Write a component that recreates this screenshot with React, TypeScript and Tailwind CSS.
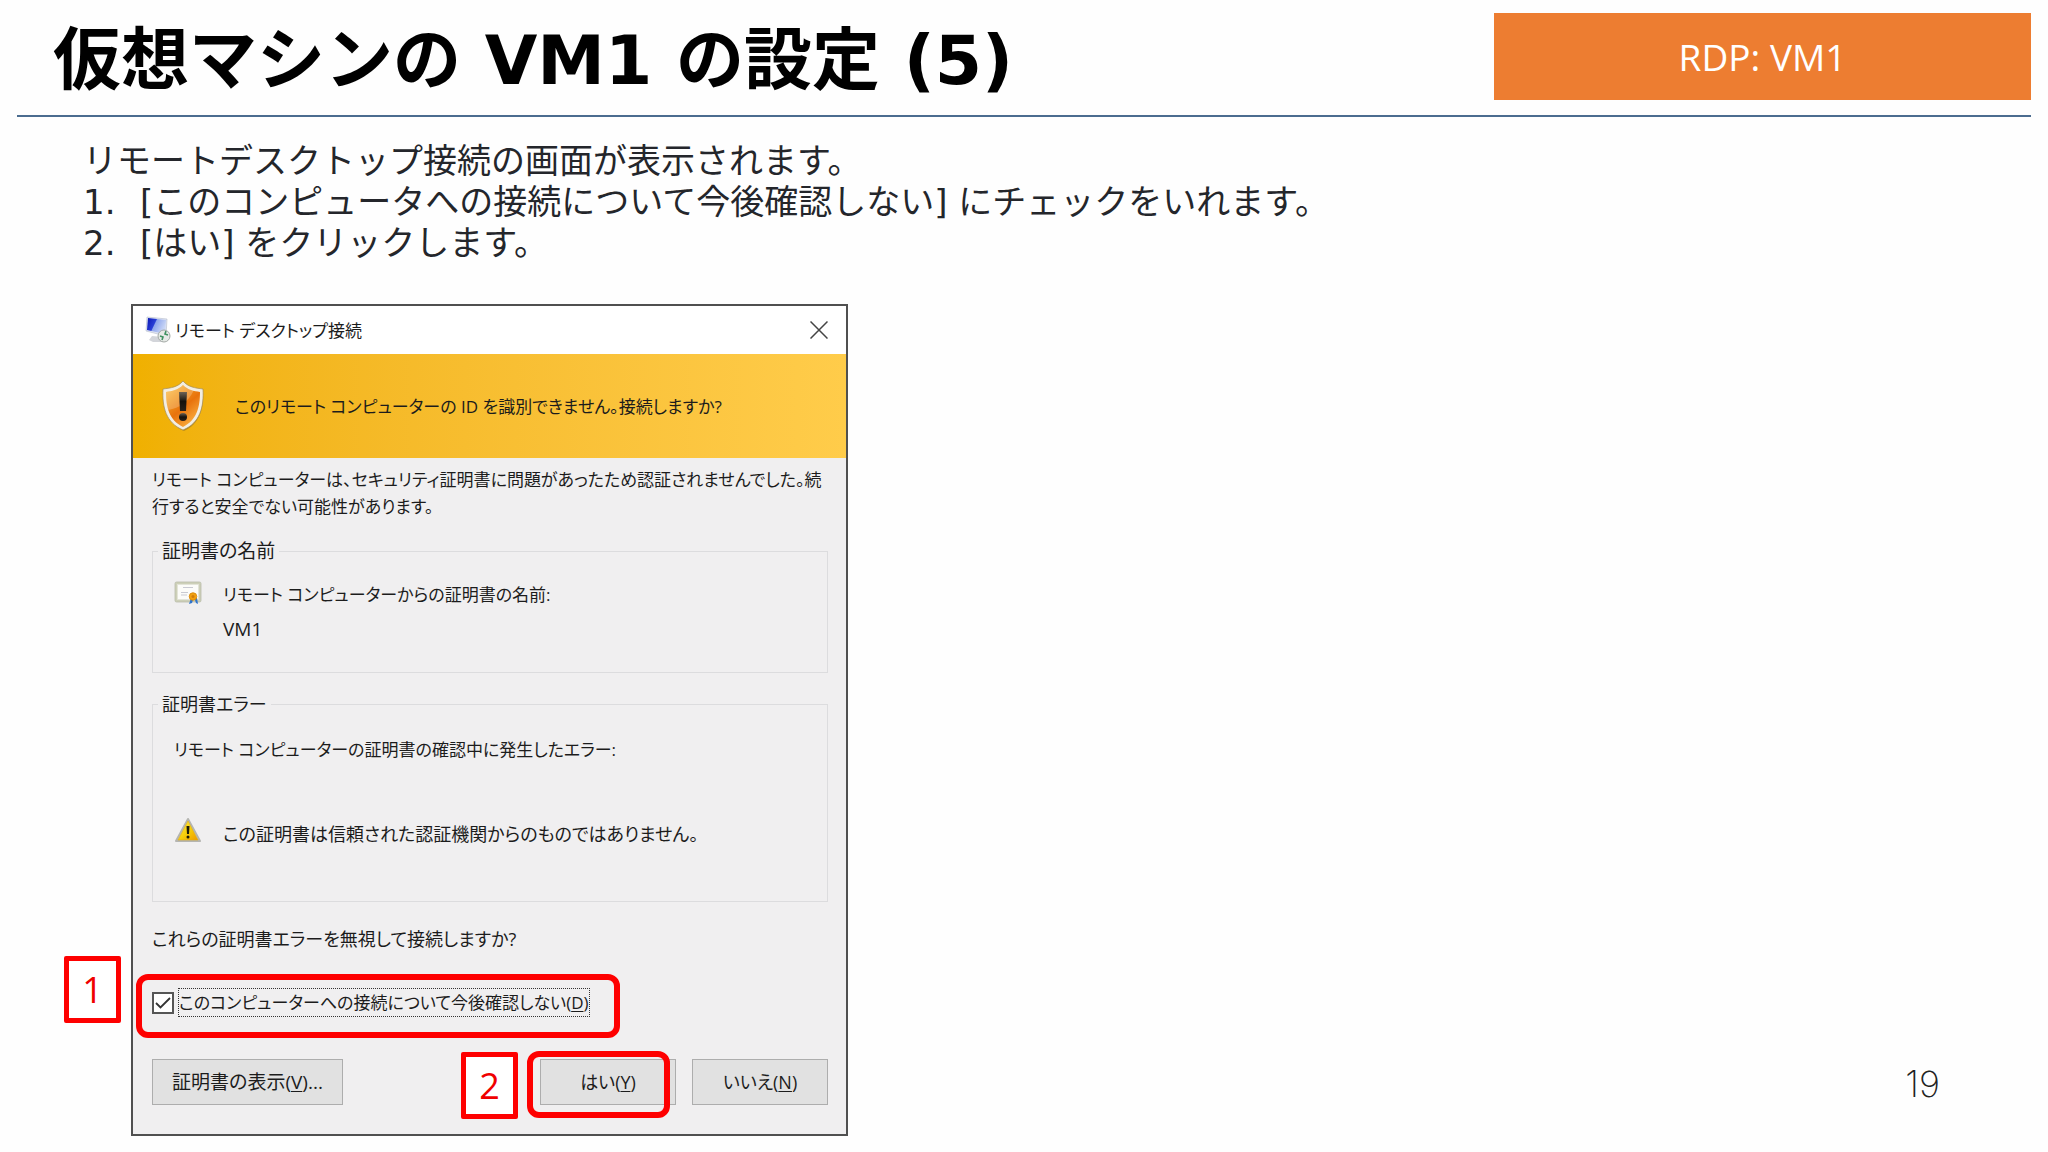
import React from 'react';

interface MarkerProps {
  label: string;
  className: string;
}

interface DialogButtonProps {
  text: string;
  accessKey: string;
  suffix?: string;
  className: string;
}

const steps = [
  '[このコンピュータへの接続について今後確認しない] にチェックをいれます。',
  '[はい] をクリックします。',
];

const RemoteDesktopIcon = () => (
  <svg width="26" height="28" viewBox="0 0 26 28" aria-hidden="true">
    <defs>
      <linearGradient id="rd-screen" x1="0" y1="0" x2="1" y2="0.4">
        <stop offset="0" stopColor="#0a16b4" />
        <stop offset="0.45" stopColor="#2a3fd6" />
        <stop offset="0.5" stopColor="#8fa6ec" />
        <stop offset="1" stopColor="#c9d6f6" />
      </linearGradient>
    </defs>
    <path d="M7 20l-3 4 4 2 10 0 0-5z" fill="#d3d5da" />
    <path d="M2 1l20 2-1 17L1 15z" fill="#dfe4f2" stroke="#b6bccb" strokeWidth="0.6" />
    <path d="M3 2l18 2-1 14L2 14z" fill="url(#rd-screen)" />
    <circle cx="19" cy="20" r="6" fill="#e6e9e6" stroke="#a4aaa6" />
    <path d="M15 20l3 1-1 3M23 19l-3-1 1-3" fill="none" stroke="#3f9160" strokeWidth="1.6" />
  </svg>
);

const ShieldIcon = () => (
  <svg width="44" height="52" viewBox="0 0 44 52" aria-hidden="true">
    <defs>
      <linearGradient id="shield-fill" x1="0" y1="0" x2="0.7" y2="1">
        <stop offset="0" stopColor="#fbc14b" />
        <stop offset="0.3" stopColor="#f39a1f" />
        <stop offset="0.6" stopColor="#e8720c" />
        <stop offset="1" stopColor="#fbb040" />
      </linearGradient>
      <linearGradient id="shield-mark" x1="0" y1="0" x2="0" y2="1">
        <stop offset="0" stopColor="#6d6255" />
        <stop offset="0.5" stopColor="#17120d" />
        <stop offset="1" stopColor="#2b2018" />
      </linearGradient>
    </defs>
    <path d="M22 2C17 7 10 9 3 9c-1 18 3 34 19 41C38 43 42 27 41 9 34 9 27 7 22 2z" fill="#8a6a20" opacity="0.5" transform="translate(1 1)" />
    <path d="M22 1C17 7 10 8 2 9c-1 18 3 34 20 41C39 43 43 27 42 9 34 8 27 7 22 1z" fill="#f3eee2" stroke="#a08a58" strokeWidth="0.7" />
    <path d="M22 5c-5 5-11 6-17 7 0 15 3 28 17 35 14-7 17-20 17-35-6-1-12-2-17-7z" fill="url(#shield-fill)" />
    <path d="M22 5c-5 5-11 6-17 7 0 7 0 12 2 18 12-2 20-8 26-20-4-1-8-2-11-5z" fill="#fff" opacity="0.22" />
    <path d="M18 12h8l-1 19h-6z" fill="url(#shield-mark)" />
    <circle cx="22" cy="37" r="4" fill="url(#shield-mark)" />
  </svg>
);

const CertificateIcon = () => (
  <svg width="28" height="24" viewBox="0 0 28 24" aria-hidden="true">
    <rect x="1" y="1" width="26" height="20" rx="1.5" fill="#cdd0b8" stroke="#b9bba9" strokeWidth="0.8" />
    <rect x="3.5" y="3.5" width="21" height="15" fill="#fcfcf9" stroke="#e3e4d8" strokeWidth="0.8" />
    <path d="M9 6.5h10M7 11.500h7M7 14h6" stroke="#c9cad2" />
    <path d="M17 17l-2 6 3-1 1-3 2 0 1 3 2 1-1-6z" fill="#2f74cf" />
    <circle cx="19" cy="15.500" r="3.800" fill="#f0a010" stroke="#d58608" strokeWidth="0.8" />
    <circle cx="19" cy="15.500" r="1.500" fill="#d27c08" />
  </svg>
);

const WarningIcon = () => (
  <svg width="28" height="26" viewBox="0 0 28 26" aria-hidden="true">
    <defs>
      <linearGradient id="warn-fill" x1="0" y1="0" x2="1" y2="1">
        <stop offset="0" stopColor="#fff04a" />
        <stop offset="0.55" stopColor="#f6cc08" />
        <stop offset="1" stopColor="#ee9a00" />
      </linearGradient>
    </defs>
    <path d="M14 2L26 24H2z" fill="#d4d4d0" stroke="#b5b5b1" strokeWidth="2" strokeLinejoin="round" />
    <path d="M14 4L24 23H4z" fill="url(#warn-fill)" stroke="#e0ac10" strokeWidth="0.6" strokeLinejoin="round" />
    <path d="M12.500 9h3l-0.500 8h-2z" fill="#1c1a08" />
    <circle cx="14" cy="20" r="1.500" fill="#1c1a08" />
  </svg>
);

// Numbered red callout box
const Marker: React.FC<MarkerProps> = ({ label, className }) => (
  <span className={`absolute flex h-[67px] w-[57px] items-center justify-center rounded-xs border-5 border-[#fe0000] bg-white text-4xl text-[#f00000] ${className}`}>
    {label}
  </span>
);

const DialogButton: React.FC<DialogButtonProps> = ({ text, accessKey, suffix, className }) => (
  <button type="button" className={`h-[46px] border border-[#adadad] bg-[#e1e1e1] ${className}`}>
    {text}(<u className="underline-offset-2">{accessKey}</u>){suffix}
  </button>
);

const CertificateDialog = () => (
  <section
    aria-labelledby="dialog-title"
    className="relative w-[717px] border-2 border-[#505050] bg-[#f0eff0] font-['Open_Sans','Noto_Sans_CJK_JP',sans-serif] text-[17px] leading-[27px] text-[#1c1c1c] [font-feature-settings:'palt']"
  >
    {/* Title bar */}
    <header className="flex h-12 items-center gap-1 bg-white pr-4 pl-3">
      <RemoteDesktopIcon />
      <h2 id="dialog-title">リモート デスクトップ接続</h2>
      <button type="button" aria-label="閉じる" className="ml-auto p-0.5">
        <svg width="18" height="18" viewBox="0 0 18 18" fill="none" stroke="#444" strokeWidth="1.500">
          <path d="M0.500 0.500l17 17M17.500 0.500l-17 17" />
        </svg>
      </button>
    </header>

    <div className="flex h-[104px] items-center gap-[30px] bg-linear-to-r from-[#f0b000] to-[#ffcc4a] pl-7">
      <ShieldIcon />
      <p>このリモート コンピューターの ID を識別できません。接続しますか?</p>
    </div>

    <div className="pt-2 pr-[18px] pb-[29px] pl-[19px]">
      <p>リモート コンピューターは、セキュリティ証明書に問題があったため認証されませんでした。続行すると安全でない可能性があります。</p>

      <fieldset className="mt-[18px] h-[135px] border border-[#dcdcde] px-[21px]">
        <legend className="-ml-4 px-1 text-[19px]">証明書の名前</legend>
        <div className="mt-4 flex gap-[21px]">
          <CertificateIcon />
          <div>
            <p>リモート コンピューターからの証明書の名前:</p>
            <p className="mt-2 text-[19px]">VM1</p>
          </div>
        </div>
      </fieldset>

      <fieldset className="mt-[18px] h-[211px] border border-[#dcdcde] px-[21px]">
        <legend className="-ml-4 px-1 text-lg/[27px]">証明書エラー</legend>
        <p className="mt-[18px]">リモート コンピューターの証明書の確認中に発生したエラー:</p>
        <div className="mt-[54px] flex gap-[21px]">
          <WarningIcon />
          <p className="mt-1 text-lg/[27px]">この証明書は信頼された認証機関からのものではありません。</p>
        </div>
      </fieldset>

      <p className="mt-6 text-lg/[27px]">これらの証明書エラーを無視して接続しますか?</p>

      <div className="mt-[35px] flex items-center gap-1">
        <span className="relative flex">
          <input id="skip-confirm" type="checkbox" defaultChecked className="peer size-[22px] appearance-none border-2 border-[#555] bg-white" />
          <svg width="22" height="22" viewBox="0 0 22 22" fill="none" stroke="#333" strokeWidth="1.800" className="pointer-events-none absolute inset-0 hidden peer-checked:block">
            <path d="M4 11l4.500 4.500L18 6" />
          </svg>
        </span>
        <label htmlFor="skip-confirm" className="border border-dotted border-[#333]">
          このコンピューターへの接続について今後確認しない(<u className="underline-offset-2">D</u>)
        </label>
      </div>

      <div className="mt-[42px] flex">
        <DialogButton text="証明書の表示" accessKey="V" suffix="..." className="w-[191px] text-[19px]" />
        <DialogButton text="はい" accessKey="Y" className="ml-auto w-[136px] text-lg" />
        <DialogButton text="いいえ" accessKey="N" className="ml-4 w-[136px] text-lg" />
      </div>
    </div>

    {/* Callouts over the dialog */}
    <span className="pointer-events-none absolute bottom-24 left-[3px] h-16 w-[484px] rounded-xl border-6 border-[#fe0000]" />
    <span className="pointer-events-none absolute bottom-4 left-[394px] h-[67px] w-[143px] rounded-xl border-6 border-[#fe0000]" />
    <Marker label="1" className="bottom-[111px] -left-[69px]" />
    <Marker label="2" className="bottom-[15px] left-[328px]" />
  </section>
);

const App: React.FC = () => {
  return (
    <main className="min-h-screen bg-[#fefefe] px-[17px] pt-[13px] pb-4 font-['DejaVu_Sans','Noto_Sans_CJK_JP',sans-serif]">
      <header className="flex items-start justify-between border-b-2 border-[#4b6c8f] pb-[6px]">
        <h1 className="pl-9 text-[68px] leading-[96px] font-bold text-black">
          仮想マシンの VM1 の設定 (5)
        </h1>
        <p className="flex h-[87px] w-[537px] items-center justify-center bg-[#ed7d31] font-['Open_Sans',sans-serif] text-[37px] text-white">
          RDP: VM1
        </p>
      </header>

      <div className="mt-6 pl-[66px] text-[34px] leading-[41px] text-[#24262b]">
        <p>リモートデスクトップ接続の画面が表示されます。</p>
        <ol>
          {steps.map((step, index) => (
            <li key={step} className="flex">
              <span className="w-[57px]">{index + 1}.</span>
              <span>{step}</span>
            </li>
          ))}
        </ol>
      </div>

      <div className="mt-10 flex items-end justify-between pr-[91px] pl-[114px]">
        <CertificateDialog />
        <p className="mb-8 font-['Inter',sans-serif] text-4xl font-extralight text-[#222]">19</p>
      </div>
    </main>
  );
};

export default App;
